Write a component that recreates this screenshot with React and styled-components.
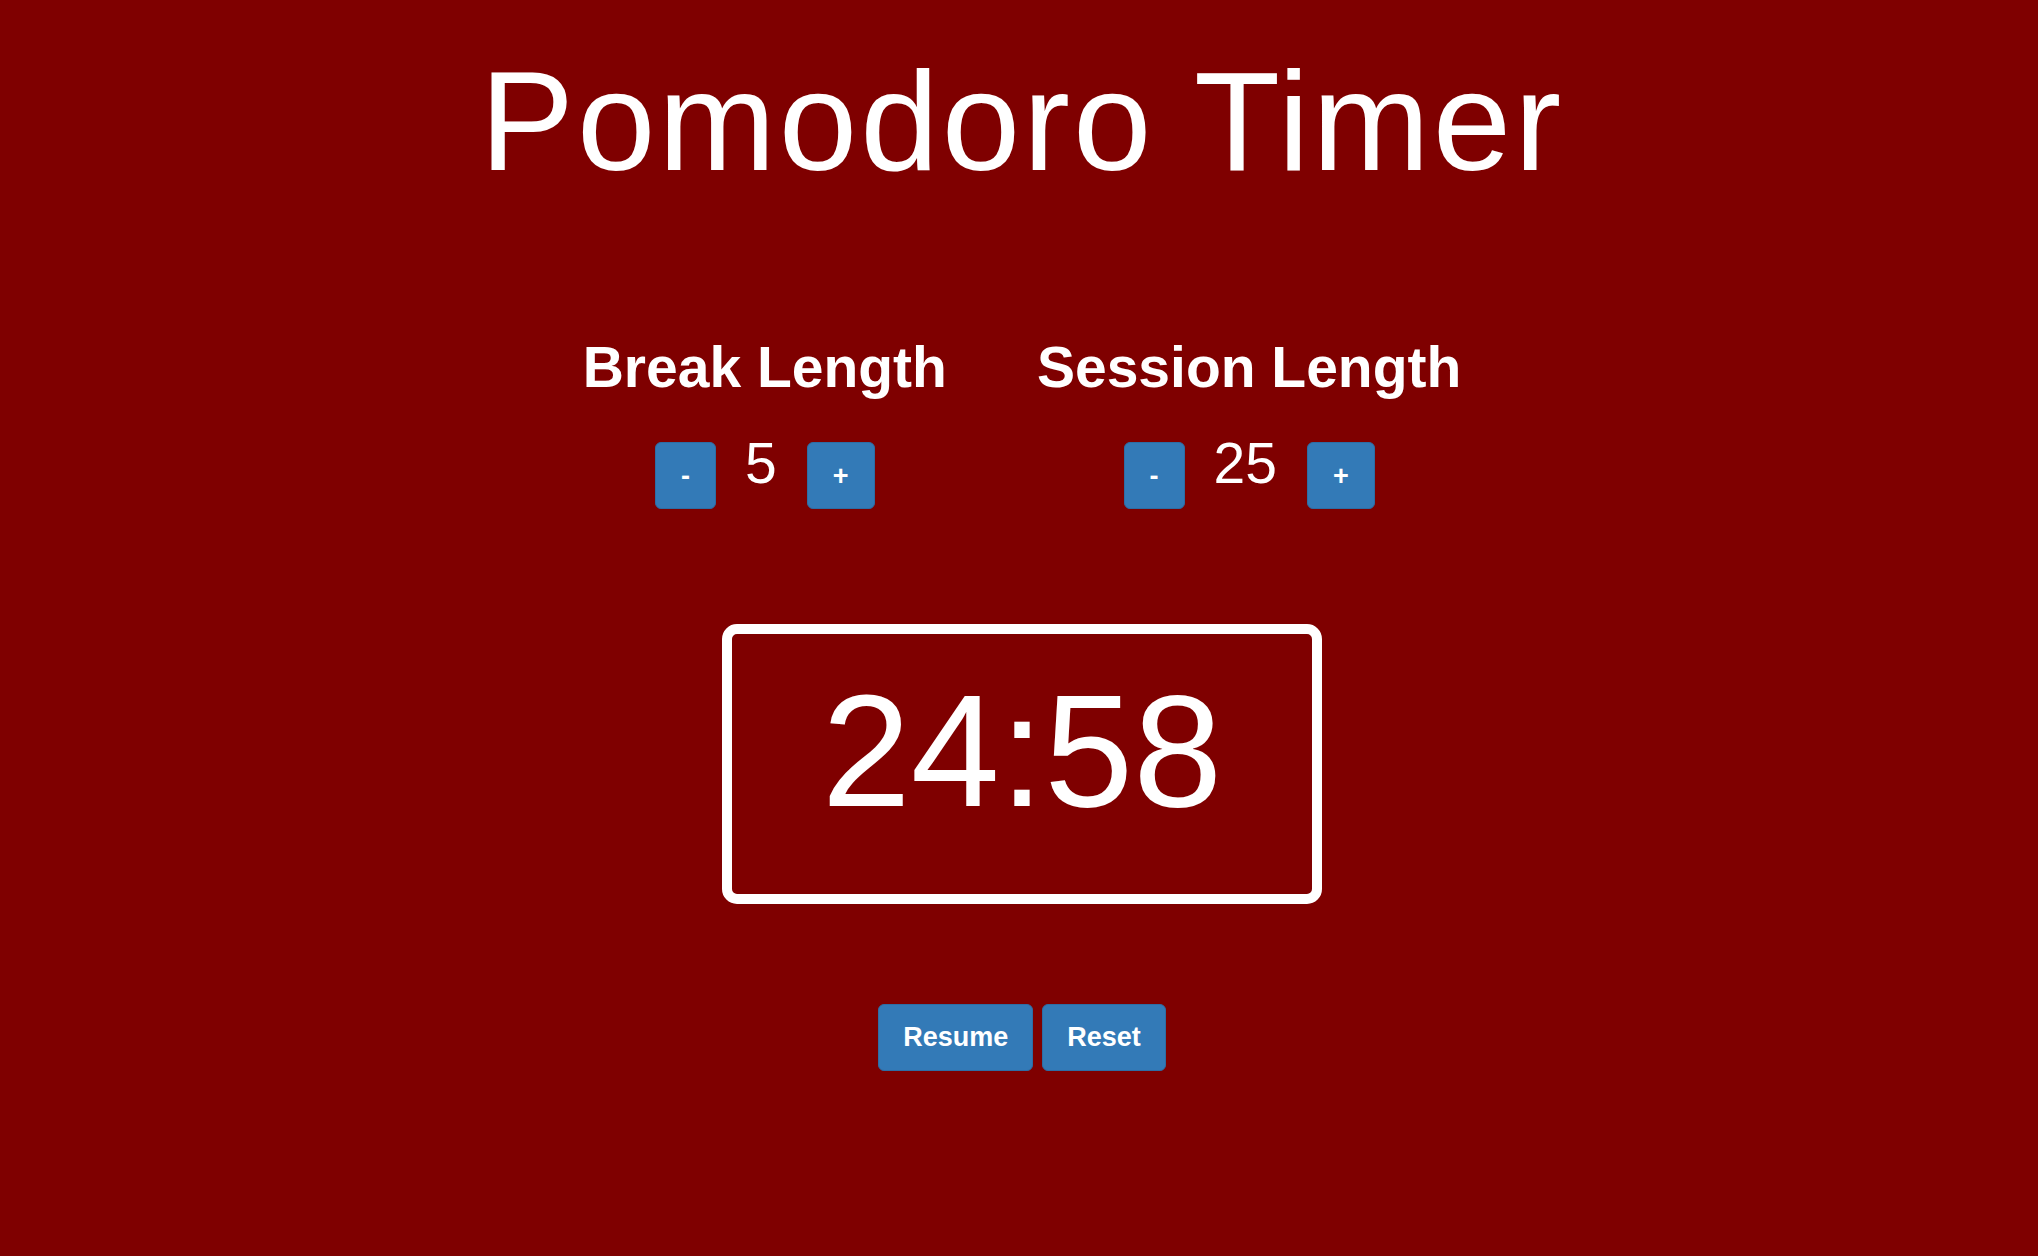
import React from 'react'
import styled, { createGlobalStyle } from 'styled-components'

const GlobalStyle = createGlobalStyle`
  html, body {
    margin: 0;
    padding: 0;
    background-color: #7f0000;
    min-height: 100%;
  }
  body {
    font-family: "Liberation Sans", Helvetica, Arial, sans-serif;
    color: white;
  }
`

const Page = styled.div`
  display: flex;
  flex-direction: column;
  align-items: center;
  min-height: 100vh;
  padding-left: 6px;
  box-sizing: border-box;
`

const Title = styled.h1`
  font-size: 141px;
  font-weight: 400;
  line-height: 1;
  letter-spacing: 3px;
  margin: 51px 0 0;
`

const Settings = styled.div`
  display: flex;
  gap: 90px;
  margin-top: 147px;
`

const Setting = styled.div`
  display: flex;
  flex-direction: column;
  align-items: center;
`

const Label = styled.div`
  font-size: 57px;
  font-weight: 700;
  line-height: 1;
  white-space: nowrap;
`

const Controls = styled.div`
  display: flex;
  align-items: flex-start;
  margin-top: 39px;
`

const Value = styled.div`
  font-size: 57px;
  line-height: 1;
  margin: 0 30px 0 29px;
`

const Button = styled.button`
  box-sizing: border-box;
  height: 67px;
  padding: 0 24px;
  background-color: #337ab7;
  border: 1px solid #2e6da4;
  border-radius: 6px;
  color: white;
  font-family: inherit;
  font-size: 27px;
  font-weight: 700;
  line-height: 1;
  cursor: pointer;
`

const StepButton = styled(Button)`
  padding: 2px 25px 0;
  margin-top: 7px;
`

const Clock = styled.div`
  box-sizing: border-box;
  width: 600px;
  height: 280px;
  margin-top: 115px;
  padding-top: 37px;
  border: 10px solid white;
  border-radius: 15px;
  text-align: center;
  font-size: 160px;
  line-height: 1;
`

const Actions = styled.div`
  display: flex;
  gap: 9px;
  margin-top: 100px;
`

export default class App extends React.Component {
  constructor(props) {
    super(props)
    this.state = { breakLength: 5, sessionLength: 25, time: '24:58' }
  }

  render() {
    const { breakLength, sessionLength, time } = this.state
    return <Page>
      <GlobalStyle/>
      <Title>Pomodoro Timer</Title>
      <Settings>
        <Setting>
          <Label>Break Length</Label>
          <Controls>
            <StepButton>-</StepButton>
            <Value>{breakLength}</Value>
            <StepButton>+</StepButton>
          </Controls>
        </Setting>
        <Setting>
          <Label>Session Length</Label>
          <Controls>
            <StepButton>-</StepButton>
            <Value>{sessionLength}</Value>
            <StepButton>+</StepButton>
          </Controls>
        </Setting>
      </Settings>
      <Clock>{time}</Clock>
      <Actions>
        <Button>Resume</Button>
        <Button>Reset</Button>
      </Actions>
    </Page>
  }
}
